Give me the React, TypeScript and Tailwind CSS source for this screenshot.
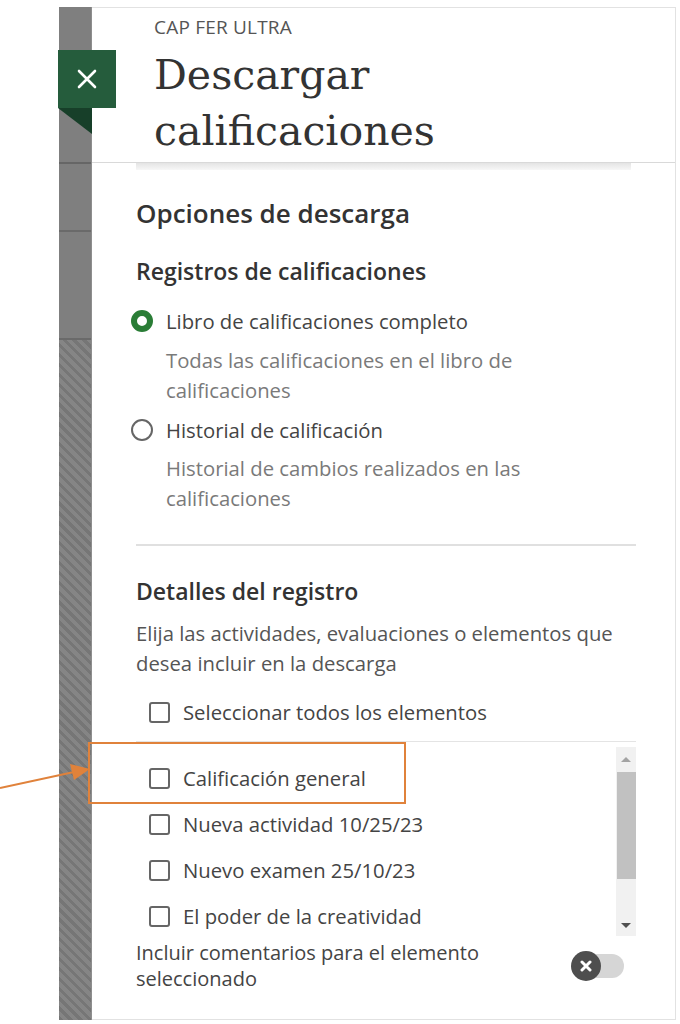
import React from "react";

function Checkbox() {
  return <span className="block w-[21px] h-[21px] border-2 border-[#666] rounded-[3px] bg-white shrink-0" />;
}

function Strip() {
  return (
    <div className="w-[33px] flex flex-col bg-[#7f7f7f] border-r border-r-[#8e8e8e] shrink-0">
      <div className="h-[155px]" />
      <div className="h-[2px] bg-[#666]" />
      <div className="h-[66px]" />
      <div className="h-[2px] bg-[#6a6a6a]" />
      <div className="h-[106px]" />
      <div className="h-[2px] bg-[#6a6a6a]" />
      <div className="flex-1 bg-[repeating-linear-gradient(45deg,#767676_0px,#767676_3px,#858585_3px,#858585_7px)]" />
    </div>
  );
}

function Radio({ checked }: { checked?: boolean }) {
  if (checked) {
    return <span className="block w-[22px] h-[22px] rounded-full border-[6px] border-[#2a7d36] bg-white shrink-0" />;
  }
  return <span className="block w-[22px] h-[22px] rounded-full border-2 border-[#666] bg-white shrink-0" />;
}

export default function App() {
  const items = [
    "Calificación general",
    "Nueva actividad 10/25/23",
    "Nuevo examen 25/10/23",
    "El poder de la creatividad",
  ];
  return (
    <div className="relative w-[680px] h-[1024px] bg-white overflow-hidden font-['Open_Sans',sans-serif]">
      <div className="flex h-[1020px] pt-[7px] pl-[59px] pr-[4px]">
        <Strip />
        <div className="flex-1 flex flex-col border border-l-0 border-[#e2e2e2] bg-white">
          {/* Header */}
          <div className="pl-[62px] pt-[8px] pb-[3px] border-b border-[#d9d9d9]">
            <div className="text-[19px] leading-[22px] text-[#555] tracking-[0.2px]">CAP FER ULTRA</div>
            <div className="mt-[9px] font-['DejaVu_Serif',serif] text-[41px] leading-[56px] text-[#333]">
              Descargar
              <br />
              calificaciones
            </div>
          </div>
          <div className="mx-[44px] h-[7px] bg-[linear-gradient(#e4e4e4,#f7f7f7)]" />
          {/* Content */}
          <div className="pl-[44px] pr-[39px] flex flex-col">
            <div className="mt-[28px] text-[26px] leading-[30px] font-semibold text-[#333]">Opciones de descarga</div>
            <div className="mt-[28px] text-[23px] leading-[30px] font-semibold text-[#333]">Registros de calificaciones</div>
            <div className="mt-[20px] flex items-center h-[30px] -ml-[5px] gap-[13px]">
              <Radio checked />
              <span className="text-[20.3px] text-[#444]">Libro de calificaciones completo</span>
            </div>
            <div className="mt-[9px] pl-[30px] text-[20.3px] leading-[30px] text-[#7a7a7a]">
              Todas las calificaciones en el libro de
              <br />
              calificaciones
            </div>
            <div className="mt-[10px] flex items-center h-[30px] -ml-[5px] gap-[13px]">
              <Radio />
              <span className="text-[20.3px] text-[#444]">Historial de calificación</span>
            </div>
            <div className="mt-[8px] pl-[30px] text-[20.3px] leading-[30px] text-[#7a7a7a]">
              Historial de cambios realizados en las
              <br />
              calificaciones
            </div>
            <div className="mt-[31px] h-[2px] bg-[#e0e0e0]" />
            <div className="mt-[30px] text-[23px] leading-[30px] font-semibold text-[#333]">Detalles del registro</div>
            <div className="mt-[12px] text-[20.3px] leading-[30px] text-[#555]">
              Elija las actividades, evaluaciones o elementos que
              <br />
              desea incluir en la descarga
            </div>
            <div className="mt-[19px] flex items-center h-[30px] pl-[13px] gap-[13px]">
              <Checkbox />
              <span className="text-[20.3px] text-[#444]">Seleccionar todos los elementos</span>
            </div>
            <div className="mt-[14px] border-t border-[#e4e4e4] h-[197px] flex overflow-hidden">
              <div className="flex-1 pt-[13px] flex flex-col">
                {items.map((t) => (
                  <div key={t} className="h-[46px] shrink-0 flex items-center pl-[13px] gap-[13px]">
                    <Checkbox />
                    <span className="text-[20.3px] text-[#444]">{t}</span>
                  </div>
                ))}
              </div>
              <div className="w-[20px] mt-[5px] h-[189px] bg-[#f1f1f1] flex flex-col items-center">
                <div className="h-[25px] flex items-center justify-center">
                  <span className="block w-0 h-0 border-l-[5px] border-r-[5px] border-b-[5px] border-l-transparent border-r-transparent border-b-[#a3a3a3]" />
                </div>
                <div className="w-[19px] h-[107px] bg-[#c1c1c1]" />
                <div className="flex-1" />
                <div className="h-[22px] flex items-center justify-center">
                  <span className="block w-0 h-0 border-l-[5px] border-r-[5px] border-t-[5px] border-l-transparent border-r-transparent border-t-[#505050]" />
                </div>
              </div>
            </div>
            <div className="flex items-center justify-between mt-[2px]">
              <div className="w-[400px] text-[20px] leading-[26px] text-[#444]">
                Incluir comentarios para el elemento seleccionado
              </div>
              <div className="relative w-[53px] h-[32px] mr-[12px]">
                <div className="absolute left-[8px] right-0 top-[4px] h-[24px] rounded-full bg-[#d6d6d6]" />
                <div className="absolute left-0 top-[1px] w-[30px] h-[30px] rounded-full bg-[#4e4e4e] flex items-center justify-center">
                  <svg width="12" height="12" viewBox="0 0 12 12">
                    <path d="M2 2 L10 10 M10 2 L2 10" stroke="white" strokeWidth="3" strokeLinecap="round" />
                  </svg>
                </div>
              </div>
            </div>
          </div>
        </div>
      </div>

      {/* Close button */}
      <div className="absolute left-[58px] top-[50px] w-[58px] h-[58px] bg-[#255c3c] flex items-center justify-center">
        <svg width="22" height="22" viewBox="0 0 22 22">
          <path d="M3 3 L19 19 M19 3 L3 19" stroke="white" strokeWidth="2.6" strokeLinecap="round" />
        </svg>
      </div>
      <svg className="absolute left-[58px] top-[108px]" width="34" height="26" viewBox="0 0 34 26">
        <polygon points="0,0 34,0 34,26" fill="#173f29" />
      </svg>

      {/* Annotation */}
      <div className="absolute left-[88px] top-[742px] w-[318px] h-[62px] border-2 border-[#e0823b]" />
      <svg className="absolute left-0 top-[755px]" width="92" height="40" viewBox="0 0 92 40">
        <line x1="0" y1="33" x2="74" y2="17" stroke="#e0823b" strokeWidth="2" />
        <polygon points="90,14 70,9 74,25" fill="#e0823b" />
      </svg>
    </div>
  );
}
